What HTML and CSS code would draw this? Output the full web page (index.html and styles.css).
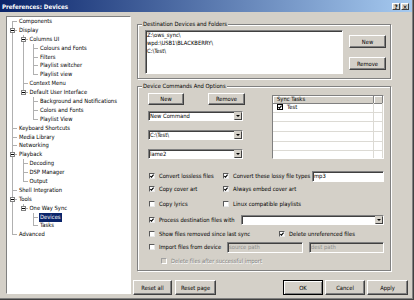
FILE: index.html
```html
<!DOCTYPE html>
<html lang="en">
<head>
    <meta charset="UTF-8">
    <title>Preferences: Devices</title>
    <link rel="stylesheet" href="styles.css">
</head>
<body>
<div class="window">
    <div class="titlebar">
        <span class="title">Preferences: Devices</span>
        <span class="cap-btn">?</span>
        <span class="cap-btn">&#215;</span>
    </div>

    <div class="client">
        <!-- page tree -->
        <div class="tree-box">
            <ul class="tree">
                <li><div class="row"><span class="lbl">Components</span></div></li>
                <li><span class="exp"></span><div class="row"><span class="lbl">Display</span></div>
                    <ul>
                        <li><span class="exp"></span><div class="row"><span class="lbl">Columns UI</span></div>
                            <ul>
                                <li><div class="row"><span class="lbl">Colours and Fonts</span></div></li>
                                <li><div class="row"><span class="lbl">Filters</span></div></li>
                                <li><div class="row"><span class="lbl">Playlist switcher</span></div></li>
                                <li><div class="row"><span class="lbl">Playlist view</span></div></li>
                            </ul>
                        </li>
                        <li><div class="row"><span class="lbl">Context Menu</span></div></li>
                        <li><span class="exp"></span><div class="row"><span class="lbl">Default User Interface</span></div>
                            <ul>
                                <li><div class="row"><span class="lbl">Background and Notifications</span></div></li>
                                <li><div class="row"><span class="lbl">Colors and Fonts</span></div></li>
                                <li><div class="row"><span class="lbl">Playlist View</span></div></li>
                            </ul>
                        </li>
                    </ul>
                </li>
                <li><div class="row"><span class="lbl">Keyboard Shortcuts</span></div></li>
                <li><div class="row"><span class="lbl">Media Library</span></div></li>
                <li><div class="row"><span class="lbl">Networking</span></div></li>
                <li><span class="exp"></span><div class="row"><span class="lbl">Playback</span></div>
                    <ul>
                        <li><div class="row"><span class="lbl">Decoding</span></div></li>
                        <li><div class="row"><span class="lbl">DSP Manager</span></div></li>
                        <li><div class="row"><span class="lbl">Output</span></div></li>
                    </ul>
                </li>
                <li><div class="row"><span class="lbl">Shell Integration</span></div></li>
                <li><span class="exp"></span><div class="row"><span class="lbl">Tools</span></div>
                    <ul>
                        <li><span class="exp"></span><div class="row"><span class="lbl">One Way Sync</span></div>
                            <ul>
                                <li><div class="row"><span class="lbl sel">Devices</span></div></li>
                                <li><div class="row"><span class="lbl">Tasks</span></div></li>
                            </ul>
                        </li>
                    </ul>
                </li>
                <li><div class="row"><span class="lbl">Advanced</span></div></li>
            </ul>
        </div>

        <!-- page -->
        <div class="page">
            <fieldset class="group group-dest">
                <legend>Destination Devices and Folders</legend>
                <div class="group-body dest-body">
                    <div class="dest-list">
                        <div>Z:\ows_sync\</div>
                        <div>wpd:\USB1\BLACKBERRY\</div>
                        <div>C:\Test\</div>
                    </div>
                    <div class="btn-col">
                        <button class="btn">New</button>
                        <button class="btn">Remove</button>
                    </div>
                </div>
            </fieldset>

            <fieldset class="group group-cmds">
                <legend>Device Commands And Options</legend>
                <div class="group-body cmds-body">
                    <div class="cmd-top">
                        <div class="cmd-left">
                            <div class="btn-row">
                                <button class="btn btn-new">New</button>
                                <button class="btn btn-remove">Remove</button>
                            </div>
                            <div class="combo"><span>New Command</span><i class="drop"></i></div>
                            <div class="combo"><span>C:\Test\</span><i class="drop"></i></div>
                            <div class="combo"><span>lame2</span><i class="drop"></i></div>
                        </div>
                        <div class="tasks">
                            <div class="tasks-head"><span>Sync Tasks</span><span></span></div>
                            <div class="tasks-row"><span><i class="box flat on"><svg viewBox="0 0 4 4"><path d="M0.4 2 L1.5 3.2 L3.6 0.6"/></svg></i>Test</span><span></span></div>
                            <div class="tasks-row"><span></span><span></span></div>
                            <div class="tasks-row"><span></span><span></span></div>
                            <div class="tasks-row"><span></span><span></span></div>
                            <div class="tasks-row"><span></span><span></span></div>
                            <div class="tasks-row"><span></span><span></span></div>
                        </div>
                    </div>

                    <div class="opts">
                        <div class="opt-row">
                            <span class="chk col-a"><i class="box on"><svg viewBox="0 0 4 4"><path d="M0.4 2 L1.5 3.2 L3.6 0.6"/></svg></i>Convert lossless files</span>
                            <span class="chk"><i class="box on"><svg viewBox="0 0 4 4"><path d="M0.4 2 L1.5 3.2 L3.6 0.6"/></svg></i>Convert these lossy file types</span>
                            <span class="edit ext">mp3</span>
                        </div>
                        <div class="opt-row">
                            <span class="chk col-a"><i class="box on"><svg viewBox="0 0 4 4"><path d="M0.4 2 L1.5 3.2 L3.6 0.6"/></svg></i>Copy cover art</span>
                            <span class="chk"><i class="box on"><svg viewBox="0 0 4 4"><path d="M0.4 2 L1.5 3.2 L3.6 0.6"/></svg></i>Always embed cover art</span>
                        </div>
                        <div class="opt-row">
                            <span class="chk col-a"><i class="box"></i>Copy lyrics</span>
                            <span class="chk"><i class="box"></i>Linux compatible playlists</span>
                        </div>
                        <div class="opt-row">
                            <span class="chk"><i class="box on"><svg viewBox="0 0 4 4"><path d="M0.4 2 L1.5 3.2 L3.6 0.6"/></svg></i>Process destination files with</span>
                            <div class="combo wide"><span></span><i class="drop"></i></div>
                        </div>
                        <div class="opt-row">
                            <span class="chk col-b"><i class="box"></i>Show files removed since last sync</span>
                            <span class="chk"><i class="box on"><svg viewBox="0 0 4 4"><path d="M0.4 2 L1.5 3.2 L3.6 0.6"/></svg></i>Delete unreferenced files</span>
                        </div>
                        <div class="opt-row">
                            <span class="chk"><i class="box"></i>Import files from device</span>
                            <span class="edit off src">source path</span>
                            <span class="edit off dst">dest path</span>
                        </div>
                        <div class="opt-row">
                            <span class="chk off indent"><i class="box"></i>Delete files after successful import</span>
                        </div>
                    </div>
                </div>
            </fieldset>

            <div class="footer">
                <button class="btn reset-all">Reset all</button>
                <button class="btn reset-page">Reset page</button>
                <div class="footer-right">
                    <button class="btn default">OK</button>
                    <button class="btn">Cancel</button>
                    <button class="btn apply">Apply</button>
                </div>
            </div>
        </div>
    </div>
</div>
</body>
</html>
```

FILE: styles.css
```css
body {
    margin: 0;
    font-family: "DejaVu Sans Condensed", "Liberation Sans", Arial, sans-serif;
    font-size: 5.8px;
    color: #000;
}

.window {
    width: 414px; height: 300px;
    box-sizing: border-box;
    display: flex;
    flex-direction: column;
    background: #d4d0c8;
    border-right: 1px solid #404040;
    border-bottom: 1px solid #404040;
    padding: 0 1px 1px 0;
    box-shadow: inset -1px -1px #808080;
}

/* title bar */
.titlebar {
    flex: none;
    height: 12px;
    display: flex;
    align-items: center;
    padding: 0 3px 0 2px;
    background: linear-gradient(to right, #0a246a, #a6caf0);
}
.title { flex: 1; color: #fff; font-weight: bold; font-size: 6.2px; }
.cap-btn {
    width: 8px; height: 7px;
    box-sizing: border-box;
    margin-left: 1px;
    background: #d4d0c8;
    border: 1px solid;
    border-color: #fff #404040 #404040 #fff;
    font-size: 6px;
    font-weight: bold;
    line-height: 5px;
    text-align: center;
}

.client {
    flex: 1;
    min-height: 0;
    display: flex;
    gap: 2px;
    padding: 4px 4px 4px 6px;
}

/* tree */
.tree-box {
    width: 125px;
    flex: none;
    box-sizing: border-box;
    background: #fff;
    border: 1px solid;
    border-color: #808080 #fff #fff #808080;
    overflow: hidden;
}
.tree, .tree ul { list-style: none; margin: 0; padding: 0; }
.tree { padding-left: 0.5px; }
.tree li { position: relative; padding-left: 10.5px; }
.tree li::before {
    content: "";
    position: absolute;
    left: 4.5px; top: 4px;
    width: 5px;
    border-top: 1px solid #b0b0b0;
}
.tree li::after {
    content: "";
    position: absolute;
    left: 4.5px; top: 0; bottom: 0;
    border-left: 1px solid #b0b0b0;
}
.tree > li:first-child::after { top: 4px; }
.tree li:last-child::after { bottom: auto; height: 4.5px; }
.tree .row { height: 8.9px; line-height: 8.9px; white-space: nowrap; }
.tree .lbl { display: inline-block; padding: 0 1px; }
.tree .lbl.sel { background: #0a246a; color: #fff; }
.tree .exp {
    position: absolute;
    left: 2.5px; top: 2px;
    width: 5px; height: 5px;
    box-sizing: border-box;
    border: 1px solid #808080;
    background: #fff;
    z-index: 1;
}
.tree .exp::before {
    content: "";
    position: absolute;
    left: 0; top: 1px;
    width: 3px; height: 1px;
    background: #000;
}

/* page */
.page { flex: 1; display: flex; flex-direction: column; }

.group {
    width: 254px;
    box-sizing: border-box;
    margin: 0 0 0 4px;
    padding: 0;
    min-width: 0;
    border: 1px solid #808080;
    box-shadow: 1px 1px #fff, inset 1px 1px #fff;
}
.group legend {
    margin-left: 4px;
    padding: 0 1px;
    line-height: 8px;
    background: #d4d0c8;
}
.group-dest { margin-top: 4px; }
.group-cmds { margin-top: 3px; }

.dest-body { display: flex; align-items: flex-start; padding: 2px 4px 4px 7px; }
.dest-list {
    width: 198px; height: 44px;
    box-sizing: border-box;
    padding: 0 1px;
    background: #fff;
    border: 1px solid;
    border-color: #808080 #fff #fff #808080;
    box-shadow: inset 1px 1px #404040;
    line-height: 8px;
}
.btn-col { display: flex; flex-direction: column; gap: 9px; margin: 5px 0 0 6px; }
.btn-col .btn { width: 37px; height: 13px; }

.btn {
    font: inherit;
    color: #000;
    padding: 0;
    background: #d4d0c8;
    border: 1px solid;
    border-color: #fff #404040 #404040 #fff;
    box-shadow: inset -1px -1px #808080;
}
.btn.default {
    border-color: #000;
    box-shadow: inset 1px 1px #fff, inset -1px -1px #808080;
}

.cmds-body { padding: 3px 6px 3px 10px; }
.cmd-top { display: flex; align-items: flex-start; }
.cmd-left { width: 97px; display: flex; flex-direction: column; }
.btn-row { display: flex; justify-content: space-between; }
.btn-row .btn { height: 12px; }
.btn-new { width: 36px; }
.btn-remove { width: 37px; }

.combo {
    width: 95px; height: 10px;
    box-sizing: border-box;
    display: flex;
    background: #fff;
    border: 1px solid;
    border-color: #808080 #fff #fff #808080;
    box-shadow: inset 1px 1px #404040;
    line-height: 8px;
}
.cmd-left .combo { margin-top: 9px; }
.cmd-left .btn-row + .combo { margin-top: 6px; }
.combo span { flex: 1; padding-left: 1px; }
.combo .drop {
    width: 8px;
    box-sizing: border-box;
    display: flex;
    align-items: center;
    justify-content: center;
    background: #d4d0c8;
    border: 1px solid;
    border-color: #d4d0c8 #404040 #404040 #d4d0c8;
}
.combo .drop::after {
    content: "";
    border-left: 2px solid transparent;
    border-right: 2px solid transparent;
    border-top: 2px solid #000;
}
.combo.wide { width: 143px; margin-left: auto; }

/* sync tasks list */
.tasks {
    width: 112px; height: 64px;
    box-sizing: border-box;
    margin: 2px 0 0 27px;
    overflow: hidden;
    background: #fff;
    border: 1px solid;
    border-color: #808080 #fff #fff #808080;
}
.tasks-head, .tasks-row { display: grid; grid-template-columns: 101px 1fr; }
.tasks-head { height: 7px; line-height: 7px; background: #d4d0c8; }
.tasks-head span {
    padding-left: 4px;
    border-right: 1px solid #808080;
    border-bottom: 1px solid #808080;
    box-shadow: inset 1px 1px #fff;
}
.tasks-row { height: 9.7px; }
.tasks-row span {
    display: flex;
    align-items: center;
    padding-left: 4px;
    border-bottom: 1px solid #dcdad4;
    border-right: 1px solid #dcdad4;
}

/* checkboxes */
.chk { display: flex; align-items: center; white-space: nowrap; }
.box {
    position: relative;
    flex: none;
    width: 6px; height: 6px;
    box-sizing: border-box;
    margin-right: 4px;
    background: #fff;
    border: 1px solid;
    border-color: #5a5a5a #e8e8e8 #e8e8e8 #5a5a5a;
}
.box.flat { border-color: #000; }
.box svg { display: block; width: 4px; height: 4px; }
.box svg path { fill: none; stroke: #000; stroke-width: 1.1; }
.chk.off { color: #808080; text-shadow: 0.5px 0.5px #fff; }
.chk.off .box { background: #d4d0c8; border-color: #a0a0a0 #fff #fff #a0a0a0; }

.opts {
    margin: 11px 0 0 1px;
    display: grid;
    grid-template-rows: 12px 14px 16px 15px 13px 14px 13px;
}
.opt-row { display: flex; align-items: center; }
.col-a { width: 74px; }
.col-b { width: 130px; }
.indent { margin-left: 12px; }

.edit {
    height: 11px;
    box-sizing: border-box;
    padding-left: 1px;
    line-height: 9px;
    background: #fff;
    border: 1px solid;
    border-color: #808080 #fff #fff #808080;
    box-shadow: inset 1px 1px #404040;
}
.edit.ext { width: 72px; margin-left: auto; }
.edit.off { background: #d4d0c8; color: #909090; }
.edit.src { width: 76px; margin-left: auto; }
.edit.dst { width: 75px; margin-left: 6px; }

/* bottom buttons */
.footer {
    margin-top: auto;
    margin-bottom: -1px;
    height: 15px;
    display: flex;
    gap: 3px;
}
.footer .btn { width: 40px; }
.footer .reset-all { width: 39px; }
.footer .reset-page { width: 41px; }
.footer .apply { width: 41px; }
.footer-right { margin-left: auto; display: flex; gap: 2px; }
```
